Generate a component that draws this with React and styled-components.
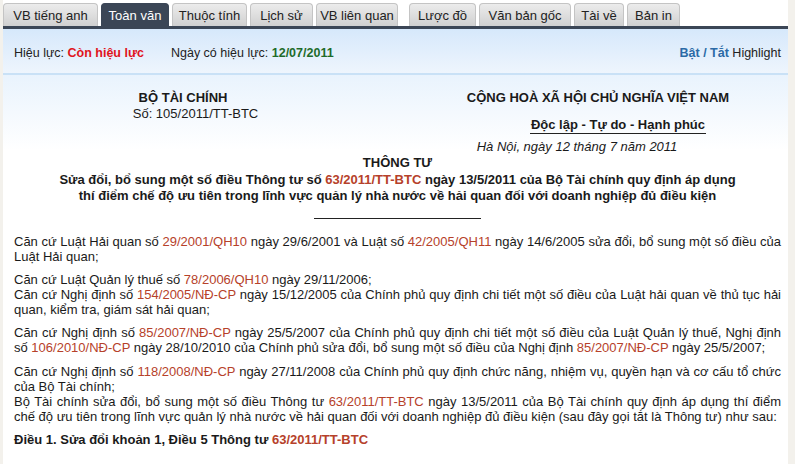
import React from "react";
import styled, { createGlobalStyle } from "styled-components";

const Global = createGlobalStyle`
  html, body { margin: 0; padding: 0; }
  body {
    background: #f3f1ec;
    font-family: Arial, "Liberation Sans", sans-serif;
    color: #1a1a1a;
  }
`;

const Page = styled.div`
  margin-left: 3px;
  width: 785px;
  height: 464px;
  background: #fff;
  overflow: hidden;
`;

const TabBar = styled.div`
  display: flex;
  gap: 3px;
  padding-top: 3px;
  height: 23px;
  border-bottom: 3px solid #3b4656;
`;

const Tab = styled.div`
  width: ${(p) => p.$w}px;
  height: 23px;
  box-sizing: border-box;
  margin-right: ${(p) => p.$gapAfter || 0}px;
  display: flex;
  align-items: center;
  justify-content: center;
  font-size: 13px;
  border-radius: 4px 4px 0 0;
  color: ${(p) => (p.$active ? "#fff" : "#222")};
  background: ${(p) =>
    p.$active ? "#3b4656" : "linear-gradient(#ececec, #d0d0d0)"};
  border: 1px solid ${(p) => (p.$active ? "#3b4656" : "#c4c4c4")};
  border-bottom: none;
`;

const InfoBar = styled.div`
  height: 46px;
  box-sizing: border-box;
  display: flex;
  align-items: center;
  padding: 3px 7px 0 11px;
  font-size: 12.5px;
  background: linear-gradient(#d6e8fb, #eef5fd);
  border-bottom: 2px solid #c9e1f6;
`;

const Label = styled.span`
  color: #222;
`;

const Value = styled.span`
  font-weight: bold;
  color: ${(p) => p.$color};
`;

const Group = styled.div`
  margin-right: ${(p) => p.$mr || 0}px;
`;

const Spacer = styled.div`
  flex: 1;
`;

const Content = styled.div`
  background: linear-gradient(#e9f3fd 0px, #ffffff 75px);
  padding: 15px 7px 0 11px;
  font-size: 13px;
`;

const HeaderRow = styled.div`
  display: flex;
`;

const HeaderCol = styled.div`
  width: ${(p) => p.$w}px;
  margin-left: ${(p) => p.$ml || 0}px;
  text-align: center;
  display: flex;
  flex-direction: column;
  align-items: center;
`;

const HeadBold = styled.div`
  font-weight: bold;
  font-size: 13px;
  line-height: 16px;
  margin-top: ${(p) => p.$mt || 0}px;
  margin-left: ${(p) => p.$shift || 0}px;
`;

const HeadUnder = styled(HeadBold)`
  border-bottom: 1px solid #222;
  line-height: 17px;
  padding: 0 1px;
`;

const HeadNormal = styled.div`
  font-size: 13px;
  line-height: 16px;
  margin-left: ${(p) => p.$shift || 0}px;
`;

const Place = styled.div`
  font-style: italic;
  font-size: 13px;
  line-height: 16px;
  text-align: center;
  margin-left: ${(p) => p.$ml}px;
  width: 260px;
  margin-top: 5px;
`;

const Title = styled.div`
  text-align: center;
  font-weight: bold;
  font-size: 13px;
  line-height: 16px;
  margin-bottom: ${(p) => p.$mb || 0}px;
`;

const Rule = styled.div`
  width: 167px;
  margin-left: 300px;
  border-bottom: 1px solid #222;
  height: 14px;
`;

const Body = styled.div`
  margin-top: 15px;
`;

const Para = styled.p`
  margin: 0 0 ${(p) => (p.$gap !== undefined ? p.$gap : 8)}px 0;
  font-size: 13px;
  line-height: 15px;
  text-align: justify;
  font-weight: ${(p) => (p.$bold ? "bold" : "normal")};
`;

const Ref = styled.span`
  color: #b6412a;
`;

const BoldLink = styled.span`
  color: #2b6aa6;
  font-weight: bold;
`;

const tabs = [
  ["VB tiếng anh", false, 95],
  ["Toàn văn", true, 68],
  ["Thuộc tính", false, 75],
  ["Lịch sử", false, 63],
  ["VB liên quan", false, 82],
  ["Lược đồ", false, 67],
  ["Văn bản gốc", false, 92],
  ["Tài về", false, 50],
  ["Bản in", false, 53],
];

export default function App() {
  return (
    <>
      <Global />
      <Page>
        <TabBar>
          {tabs.map(([t, a, w], i) => (
            <Tab key={t} $active={a} $w={w} $gapAfter={i === 4 ? 8 : 0}>
              {t}
            </Tab>
          ))}
        </TabBar>
        <InfoBar>
          <Group $mr={27}>
            <Label>Hiệu lực: </Label>
            <Value $color="#e0141c">Còn hiệu lực</Value>
          </Group>
          <Group>
            <Label>Ngày có hiệu lực: </Label>
            <Value $color="#1e6b2a">12/07/2011</Value>
          </Group>
          <Spacer />
          <Group>
            <BoldLink>Bật / Tắt</BoldLink> <Label>Highlight</Label>
          </Group>
        </InfoBar>
        <Content>
          <HeaderRow>
            <HeaderCol $w={260} $ml={39}>
              <HeadBold>BỘ TÀI CHÍNH</HeadBold>
              <HeadNormal $shift={25}>Số: 105/2011/TT-BTC</HeadNormal>
            </HeaderCol>
            <HeaderCol $w={320} $ml={125}>
              <HeadBold>CỘNG HOÀ XÃ HỘI CHỦ NGHĨA VIỆT NAM</HeadBold>
              <HeadUnder $mt={10} $shift={40}>
                Độc lập - Tự do - Hạnh phúc
              </HeadUnder>
            </HeaderCol>
          </HeaderRow>
          <Place $ml={433}>Hà Nội, ngày 12 tháng 7 năm 2011</Place>
          <Title $mb={1}>THÔNG TƯ</Title>
          <Title>
            Sửa đổi, bổ sung một số điều Thông tư số <Ref>63/2011/TT-BTC</Ref> ngày
            13/5/2011 của Bộ Tài chính quy định áp dụng
            <br />
            thí điểm chế độ ưu tiên trong lĩnh vực quản lý nhà nước về hải quan
            đối với doanh nghiệp đủ điều kiện
          </Title>
          <Rule />
          <Body>
            <Para>
              Căn cứ Luật Hải quan số <Ref>29/2001/QH10</Ref> ngày 29/6/2001 và
              Luật số <Ref>42/2005/QH11</Ref> ngày 14/6/2005 sửa đổi, bổ sung
              một số điều của Luật Hải quan;
            </Para>
            <Para $gap={0}>
              Căn cứ Luật Quản lý thuế số <Ref>78/2006/QH10</Ref> ngày
              29/11/2006;
            </Para>
            <Para>
              Căn cứ Nghị định số <Ref>154/2005/NĐ-CP</Ref> ngày 15/12/2005 của
              Chính phủ quy định chi tiết một số điều của Luật hải quan về thủ
              tục hải quan, kiểm tra, giám sát hải quan;
            </Para>
            <Para $gap={9}>
              Căn cứ Nghị định số <Ref>85/2007/NĐ-CP</Ref> ngày 25/5/2007 của
              Chính phủ quy định chi tiết một số điều của Luật Quản lý thuế,
              Nghị định số <Ref>106/2010/NĐ-CP</Ref> ngày 28/10/2010 của Chính
              phủ sửa đổi, bổ sung một số điều của Nghị định{" "}
              <Ref>85/2007/NĐ-CP</Ref> ngày 25/5/2007;
            </Para>
            <Para $gap={0}>
              Căn cứ Nghị định số <Ref>118/2008/NĐ-CP</Ref> ngày 27/11/2008 của
              Chính phủ quy định chức năng, nhiệm vụ, quyền hạn và cơ cấu tổ
              chức của Bộ Tài chính;
            </Para>
            <Para>
              Bộ Tài chính sửa đổi, bổ sung một số điều Thông tư{" "}
              <Ref>63/2011/TT-BTC</Ref> ngày 13/5/2011 của Bộ Tài chính quy
              định áp dụng thí điểm chế độ ưu tiên trong lĩnh vực quản lý nhà
              nước về hải quan đối với doanh nghiệp đủ điều kiện (sau đây gọi
              tắt là Thông tư) như sau:
            </Para>
            <Para $bold>
              Điều 1. Sửa đổi khoản 1, Điều 5 Thông tư <Ref>63/2011/TT-BTC</Ref>
            </Para>
          </Body>
        </Content>
      </Page>
    </>
  );
}
